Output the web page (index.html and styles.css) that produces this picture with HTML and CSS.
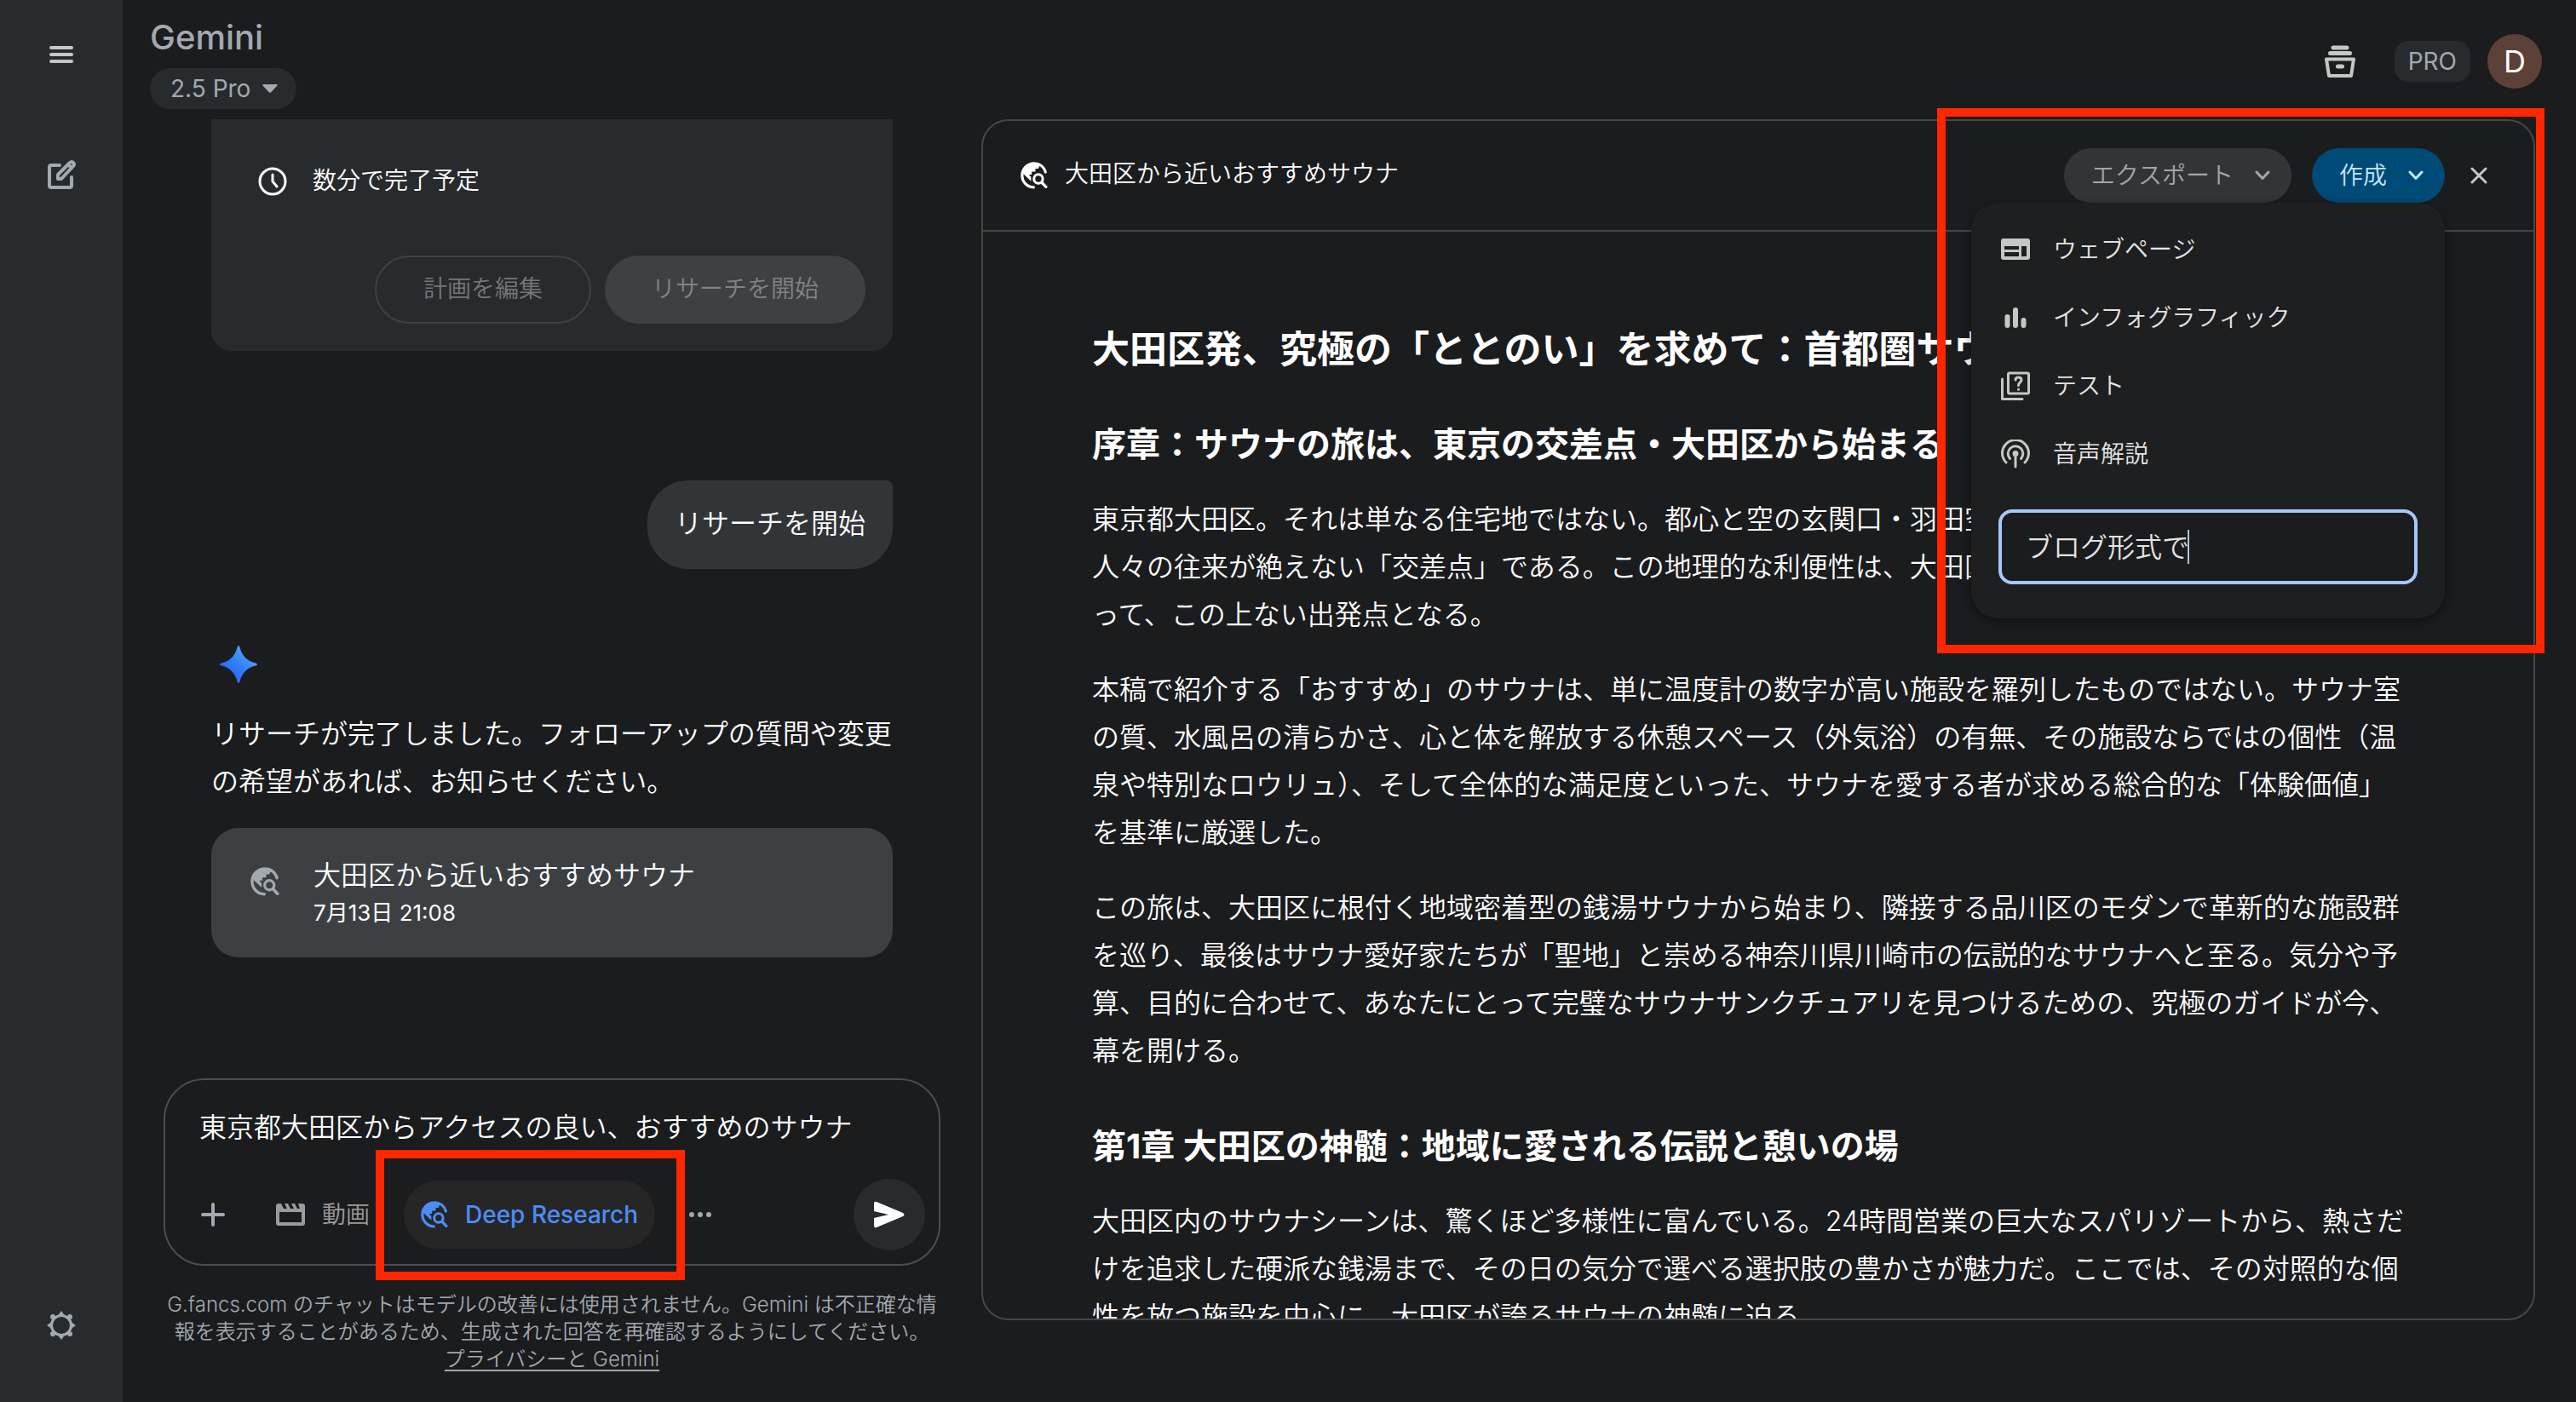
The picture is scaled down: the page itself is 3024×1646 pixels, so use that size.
FILE: index.html
```html
<!DOCTYPE html>
<html lang="ja">
<head>
<meta charset="utf-8">
<title>Gemini</title>
<link rel="stylesheet" href="styles.css">
</head>
<body>
<svg class="defs" aria-hidden="true">
  <symbol id="research" viewBox="0 0 24 24">
    <path fill="none" stroke="currentColor" stroke-width="2.4" stroke-linecap="round" d="M11.5 22.4C5.700 22.300 1.400 17.600 1.400 12 1.400 6 6.200 1.400 12 1.400c4.800 0 8.700 3 10 7.600"/>
    <path fill="currentColor" d="M1.400 9.500 9.300 17v-3.600l-2-2.200h2.600V8.600h3.200V6h2.500l1.600-3.500L12 1C6 1 2 5 1.400 9.500z"/>
    <circle cx="15.700" cy="15" r="3.900" fill="none" stroke="currentColor" stroke-width="2.300"/>
    <path stroke="currentColor" stroke-width="2.500" stroke-linecap="round" d="m18.700 18.200 3.700 3.800"/>
  </symbol>
  <symbol id="chevron" viewBox="0 0 20 12">
    <path fill="none" stroke="currentColor" stroke-width="3" stroke-linecap="round" stroke-linejoin="round" d="m3 2 7 7.500L17 2"/>
  </symbol>
</svg>
<div class="app">
  <nav class="rail">
    <button class="icon-button" aria-label="メニュー"><svg width="32" height="24" viewBox="0 0 32 24"><path stroke="#c4c7c5" stroke-width="4" stroke-linecap="round" d="M4 4h24M4 12h24M4 20h24"/></svg></button>
    <button class="icon-button rail-edit" aria-label="新しいチャット"><svg width="36" height="40" viewBox="0 0 36 40" fill="none" stroke="#a2a9b0" stroke-width="4" stroke-linecap="round" stroke-linejoin="round"><path d="M16 10H6q-2 0-2 2v22q0 2 2 2h22q2 0 2-2V24"/><path d="M14 26v-5L28 7q2-2 4 0t0 4L18 26z"/><path d="m26 9 4 4"/></svg></button>
    <button class="icon-button rail-gear" aria-label="設定"><svg width="36" height="36" viewBox="0 0 36 36"><g fill="#a2a9b0"><path fill-rule="evenodd" d="M18 5a13 13 0 1 0 0 26 13 13 0 0 0 0-26zm0 3a10 10 0 1 1 0 20 10 10 0 0 1 0-20z"/><path d="m18 1 4 5.500h-8zM18 35l4-5.500h-8zM1 18l5.500 4v-8zM35 18l-5.500 4v-8z"/><circle cx="8" cy="8" r="3"/><circle cx="28" cy="8" r="3"/><circle cx="8" cy="28" r="3"/><circle cx="28" cy="28" r="3"/></g></svg></button>
  </nav>
  <div class="main">
    <header class="topbar">
      <div class="brand">
        <span class="brand-name">Gemini</span>
        <button class="model">2.5 Pro<svg width="18" height="10" viewBox="0 0 18 10"><path fill="currentColor" d="M1 0h16q1.500 1 0 2L10 9.500q-1 .8-2 0L1 2Q-.5 1 1 0z"/></svg></button>
      </div>
      <div class="account">
        <button class="icon-button" aria-label="ファイル"><svg width="36" height="40" viewBox="0 0 36 40" fill="none" stroke="#c4c7c5" stroke-width="4" stroke-linecap="round" stroke-linejoin="round"><path stroke-width="5" d="M10 4h16M6.500 10.500h23"/><path d="M2 17.500h32l-3 19.500H5z"/><path stroke-width="5" d="M15.500 26h5"/></svg></button>
        <span class="plan">PRO</span>
        <button class="avatar">D</button>
      </div>
    </header>
    <div class="columns">
      <section class="chat">
        <div class="thread">
          <div class="plan-card">
            <div class="eta"><svg width="34" height="34" viewBox="0 0 34 34" fill="none" stroke="currentColor" stroke-width="3" stroke-linecap="round"><circle cx="17" cy="17" r="15"/><path d="M17 9v8l5 6"/></svg><span>数分で完了予定</span></div>
            <div class="plan-actions"><button class="edit-plan" disabled>計画を編集</button><button class="start" disabled>リサーチを開始</button></div>
          </div>
          <p class="bubble">リサーチを開始</p>
          <svg class="spark" width="44" height="44" viewBox="0 0 44 44"><defs><linearGradient id="g" x1="0" y1="1" x2="1" y2="0"><stop offset=".2" stop-color="#3163f4"/><stop offset=".5" stop-color="#3180fb"/><stop offset=".85" stop-color="#5ba8ff"/></linearGradient></defs><path fill="url(#g)" d="M22 0q1 0 1.500 2C26 12 32 18 42 20.500q2 .5 2 1.500t-2 1.500C32 26 26 32 23.500 42q-.5 2-1.500 2t-1.500-2C18 32 12 26 2 23.500Q0 23 0 22t2-1.500C12 18 18 12 20.500 2q.5-2 1.500-2z"/></svg>
          <p class="answer">リサーチが完了しました。フォローアップの質問や変更の希望があれば、お知らせください。</p>
          <button class="result"><svg width="34" height="34"><use href="#research"/></svg><span><span class="result-title">大田区から近いおすすめサウナ</span><span class="result-date">7月13日 21:08</span></span></button>
        </div>
        <div class="composer">
          <input class="prompt" aria-label="プロンプト" value="東京都大田区からアクセスの良い、おすすめのサウナ">
          <div class="tools">
            <button class="icon-button" aria-label="追加"><svg width="32" height="32" viewBox="0 0 32 32"><path stroke="#a2a9b0" stroke-width="4" stroke-linecap="round" d="M16 4v24M4 16h24"/></svg></button>
            <button class="video"><svg width="34" height="28" viewBox="0 0 34 28"><path fill="currentColor" fill-rule="evenodd" d="M3 1h3l3 6h4l-3-6h4l3 6h4l-3-6h4l3 6h3l-2-6h5q3 0 3 3v20q0 3-3 3H3q-3 0-3-3V4q0-3 3-3zm1 10v12h26V11z"/></svg>動画</button>
            <button class="deep"><svg width="32" height="32"><use href="#research"/></svg>Deep Research</button>
            <button class="icon-button more" aria-label="その他"><svg width="26" height="8" viewBox="0 0 26 8" fill="#a2a9b0"><circle cx="3" cy="4" r="3"/><circle cx="13" cy="4" r="3"/><circle cx="23" cy="4" r="3"/></svg></button>
            <button class="send" aria-label="送信"><svg width="36" height="32" viewBox="0 0 36 32"><path fill="#fff" d="M0 3q0-3 3-2l31 13q3 2 0 4L3 31q-3 1-3-2v-9l17-4L0 12z"/></svg></button>
          </div>
          <div class="mark mark-deep"></div>
        </div>
        <p class="notice">G.fancs.com のチャットはモデルの改善には使用されません。Gemini は不正確な情報を表示することがあるため、生成された回答を再確認するようにしてください。<br><a href="#privacy">プライバシーと Gemini</a></p>
      </section>
      <section class="panel">
        <header class="panel-head">
          <svg width="32" height="32"><use href="#research"/></svg>
          <span class="panel-title">大田区から近いおすすめサウナ</span>
          <button class="export">エクスポート<svg width="20" height="12"><use href="#chevron"/></svg></button>
          <div class="create-wrap">
            <button class="create">作成<svg width="20" height="12"><use href="#chevron"/></svg></button>
            <div class="menu">
              <button class="item"><svg width="34" height="34" viewBox="0 0 34 34"><path fill="#c4c7c5" fill-rule="evenodd" d="M3 4h28q3 0 3 3v19q0 3-3 3H3q-3 0-3-3V7q0-3 3-3zm1 9v4h17v-4zm0 7v5h17v-5zm20-7v12h6V13z"/></svg>ウェブページ</button>
              <button class="item"><svg width="34" height="34" viewBox="0 0 34 34"><path stroke="#c4c7c5" stroke-width="6" stroke-linecap="round" d="M7.500 16v10M17 8v18M26.500 20v6"/></svg>インフォグラフィック</button>
              <button class="item"><svg width="34" height="34" viewBox="0 0 34 34" fill="none" stroke="#c4c7c5" stroke-width="3" stroke-linecap="round" stroke-linejoin="round"><rect x="8.500" y="2" width="24" height="24" rx="1.500"/><path d="M1.500 9v23.500H25"/><path d="M17 10q0-3 3.500-3t3.500 3c0 3-3.500 3-3.500 6.500M20.500 21v.2"/></svg>テスト</button>
              <button class="item"><svg width="34" height="34" viewBox="0 0 34 34" fill="none" stroke="#c4c7c5" stroke-width="3" stroke-linecap="round"><path d="M6 27a15.500 15.500 0 1 1 22 0M10.500 22.500a8.800 8.800 0 1 1 13 0M17 18v14"/><circle cx="17" cy="16.500" r="2" fill="#c4c7c5"/></svg>音声解説</button>
              <div class="field"><input aria-label="作成内容" value="ブログ形式で"><span class="caret"></span></div>
            </div>
          </div>
          <button class="icon-button close" aria-label="閉じる"><svg width="20" height="20" viewBox="0 0 20 20"><path stroke="#c4c7c5" stroke-width="3" stroke-linecap="round" d="m2 2 16 16M18 2 2 18"/></svg></button>
        </header>
        <article class="report">
          <h1>大田区発、究極の「ととのい」を求めて：首都圏サウナ完全ガイド</h1>
          <h2>序章：サウナの旅は、東京の交差点・大田区から始まる</h2>
          <p>東京都大田区。それは単なる住宅地ではない。都心と空の玄関口・羽田空港を擁し、国内外から訪れる<br>人々の往来が絶えない「交差点」である。この地理的な利便性は、大田区を拠点にサウナを巡る者にと<br>って、この上ない出発点となる。</p>
          <p>本稿で紹介する「おすすめ」のサウナは、単に温度計の数字が高い施設を羅列したものではない。サウナ室<br>の質、水風呂の清らかさ、心と体を解放する休憩スペース（外気浴）の有無、その施設ならではの個性（温<br>泉や特別なロウリュ）、そして全体的な満足度といった、サウナを愛する者が求める総合的な「体験価値」<br>を基準に厳選した。</p>
          <p>この旅は、大田区に根付く地域密着型の銭湯サウナから始まり、隣接する品川区のモダンで革新的な施設群<br>を巡り、最後はサウナ愛好家たちが「聖地」と崇める神奈川県川崎市の伝説的なサウナへと至る。気分や予<br>算、目的に合わせて、あなたにとって完璧なサウナサンクチュアリを見つけるための、究極のガイドが今、<br>幕を開ける。</p>
          <h2 class="chapter">第1章 大田区の神髄：地域に愛される伝説と憩いの場</h2>
          <p>大田区内のサウナシーンは、驚くほど多様性に富んでいる。24時間営業の巨大なスパリゾートから、熱さだ<br>けを追求した硬派な銭湯まで、その日の気分で選べる選択肢の豊かさが魅力だ。ここでは、その対照的な個<br>性を放つ施設を中心に、大田区が誇るサウナの神髄に迫る。</p>
        </article>
        <div class="mark mark-create"></div>
      </section>
    </div>
  </div>
</div>
</body>
</html>
```
FILE: styles.css
```css
* { box-sizing: border-box; }
html, body { margin: 0; height: 100%; }
body {
  background: #1b1c1e;
  color: #fff;
  font-family: Inter, "Noto Sans CJK JP", sans-serif;
  font-size: 28px;
  font-weight: 350;
  line-height: 40px;
  overflow: hidden;
}
button, input { font: inherit; color: inherit; border: 0; background: none; padding: 0; margin: 0; outline: 0; }
button { display: flex; align-items: center; white-space: nowrap; }
svg { display: block; flex: none; }
p, h1, h2 { margin: 0; }
.defs { position: absolute; width: 0; height: 0; }
.icon-button { justify-content: center; flex: none; }

.app { display: flex; height: 100vh; }
.rail { flex: none; width: 144px; background: #282b2e; display: flex; flex-direction: column; align-items: center; padding: 52px 0 72px; }
.rail-edit { margin-top: 108px; }
.rail-gear { margin-top: auto; }

.main { flex: 1; min-width: 0; display: flex; flex-direction: column; }
.topbar { height: 140px; flex: none; display: flex; justify-content: space-between; align-items: flex-start; padding: 20px 40px 0 32px; }
.brand { color: #a2a9b0; font-weight: 400; }
.brand-name { display: block; font-size: 40px; line-height: 48px; margin-bottom: 12px; font-weight: 500; }
.model { height: 48px; padding: 0 22px 0 24px; gap: 14px; border-radius: 24px; background: #282b2e; }
.account { display: flex; align-items: center; padding-top: 20px; }
.plan { margin: 0 20px 0 46px; padding: 0 16px; line-height: 48px; border-radius: 16px; background: #282b2e; color: #a2a9b0; font-weight: 400; }
.avatar { width: 64px; height: 64px; justify-content: center; border-radius: 50%; background: #5d4037; font-size: 36px; font-weight: 400; }

.columns { flex: 1; min-height: 0; display: flex; padding: 0 48px; gap: 48px; }
.chat { flex: none; width: 912px; display: flex; flex-direction: column; padding-bottom: 34px; }
.thread { flex: 1; padding: 0 56px; display: flex; flex-direction: column; align-items: flex-start; }
.plan-card { width: 100%; background: #282b2e; border-radius: 0 0 24px 24px; padding: 52px 32px 32px; }
.eta { display: flex; align-items: center; gap: 30px; padding-left: 23px; }
.eta span { padding-bottom: 2px; }
.plan-actions { display: flex; justify-content: flex-end; gap: 16px; margin-top: 66px; }
.plan-actions button { height: 80px; border-radius: 40px; padding: 0 55px 2px; color: #747779; }
.plan-actions .edit-plan { border: 2px solid #3e4144; }
.plan-actions .start { background: #3e4144; color: #808385; }
.bubble { align-self: flex-end; margin-top: 152px; padding: 23px 32px 25px; font-size: 32px; line-height: 56px; background: #323538; border-radius: 48px 8px 48px 48px; }
.spark { margin: 90px 0 32px 10px; }
.answer { font-size: 32px; line-height: 56px; }
.result { margin-top: 26px; width: 100%; height: 152px; border-radius: 32px; background: #3d4043; padding: 0 46px; gap: 40px; text-align: left; }
.result svg { color: #a2a9b0; margin-bottom: 26px; }
.result-title { display: block; font-size: 32px; line-height: 48px; }
.result-date { display: block; font-size: 26px; line-height: 40px; font-weight: 400; }

.composer { position: relative; border: 2px solid #4b4e51; border-radius: 48px; height: 220px; padding: 28px 16px 16px 40px; display: flex; flex-direction: column; justify-content: space-between; }
.prompt { width: 100%; font-size: 32px; line-height: 56px; height: 56px; }
.tools { display: flex; align-items: center; }
.video { margin: 0 40px 0 58px; gap: 20px; color: #9a9b9c; }
.deep { height: 80px; padding: 0 20px 0 20px; gap: 20px; border-radius: 40px; background: #262626; color: #4c8df6; font-weight: 500; }
.more { margin-left: 40px; }
.send { margin-left: auto; width: 84px; height: 84px; border-radius: 50%; background: #282b2e; justify-content: center; }
.notice { margin-top: 30px; font-size: 24px; line-height: 32px; color: #a2a9b0; text-align: center; }
.notice a { color: inherit; text-underline-offset: 4px; }

.panel { position: relative; flex: 1; min-width: 0; height: 1410px; border: 2px solid #444746; border-radius: 32px; display: flex; flex-direction: column; }
.panel-head { height: 130px; flex: none; border-bottom: 2px solid #444746; padding: 32px 54px 0 44px; display: flex; align-items: flex-start; }
.panel-head > svg { margin-top: 16px; }
.panel-title { margin: 10px auto 0 20px; }
.export, .create { height: 64px; border-radius: 32px; padding: 0 24px 0 32px; gap: 24px; }
.export { background: #323538; color: #a4a5a6; margin-right: 24px; }
.create-wrap { position: relative; }
.create { background: #004a77; color: #c2e7ff; }
.close { height: 64px; margin-left: 30px; }
.menu { position: absolute; z-index: 2; top: 64px; right: 0; width: 556px; padding: 16px 32px 40px; background: #1e1f20; border-radius: 32px; box-shadow: 0 4px 12px #0006; color: #e3e3e3; }
.item { width: 100%; height: 80px; padding: 0 0 2px 3px; gap: 27px; }
.field { position: relative; margin-top: 24px; height: 88px; border: 4px solid #a8c7fa; border-radius: 16px; background: #1b1c1e; }
.field input { width: 100%; height: 76px; padding: 0 28px; font-size: 32px; }
.caret { position: absolute; left: 218px; top: 20px; width: 2px; height: 40px; background: #a8c7fa; }

.report { flex: 1; min-height: 0; overflow: hidden; padding: 110px 128px 0; font-size: 32px; line-height: 56px; white-space: nowrap; }
.report h1 { font-size: 44px; line-height: 56px; font-weight: 700; margin-bottom: 56px; }
.report h2 { font-size: 40px; line-height: 56px; font-weight: 700; margin-bottom: 32px; }
.report p { margin-bottom: 32px; }
.report .chapter { margin-top: 56px; }

.mark { position: absolute; z-index: 3; border: 10px solid #ff2600; pointer-events: none; }
.mark-deep { left: 247px; top: 82px; width: 363px; height: 153px; }
.mark-create { top: -15px; right: -13px; width: 713px; height: 640px; }
```
